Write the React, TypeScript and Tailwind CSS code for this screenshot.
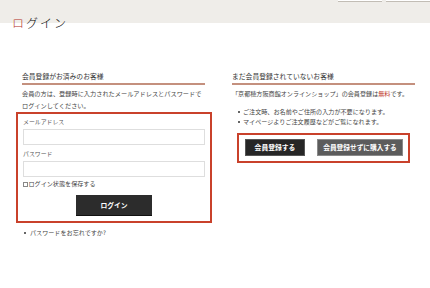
import React from 'react';

const FONT = { fontFamily: '"Noto Sans CJK JP", "Noto Sans", sans-serif' };

function SectionHeading({ children }: { children: React.ReactNode }) {
  return (
    <h2 className="text-[6.8px] leading-[10px] text-[#333] pb-[2px] border-b-2 border-[#c4907e]">
      {children}
    </h2>
  );
}

function Field({ label }: { label: string }) {
  return (
    <div>
      <div className="text-[5.9px] leading-[10px] text-[#555]">{label}</div>
      <input className="mt-[2px] block w-full h-[16px] border border-[#dedede] bg-white outline-none" />
    </div>
  );
}

export default function App() {
  return (
    <div className="w-[430px] h-[288px] bg-white overflow-hidden text-[#333]" style={FONT}>
      {/* top band */}
      <div className="h-[23px] bg-[#efede9] flex justify-end items-start gap-[4px]">
        <div className="w-[44px] h-[2px] bg-white border-b border-[#c2bdb5]" />
        <div className="w-[44px] h-[2px] bg-white border-b border-[#c2bdb5]" />
      </div>

      <h1 className="-mt-[8px] pl-[12px] text-[12px] leading-[16px] tracking-[2px] font-light text-black">
        <span className="text-[#b5322a]">ロ</span>グイン
      </h1>

      <div className="mt-[40px] pl-[22px] pr-[15px] flex gap-[27px]">
        {/* left column */}
        <div className="w-[183px]">
          <SectionHeading>会員登録がお済みのお客様</SectionHeading>
          <p className="mt-[3px] text-[6.2px] leading-[12px] text-[#444]">
            会員の方は、登録時に入力されたメールアドレスとパスワードで
            <br />
            ログインしてください。
          </p>
          <div className="-ml-[6px] -mr-[7px] border-2 border-[#c9412b] px-[5px] pt-[3px] pb-[5px]">
            <Field label="メールアドレス" />
            <div className="mt-[4px]">
              <Field label="パスワード" />
            </div>
            <label className="mt-[2px] flex items-center text-[6.1px] leading-[10px] text-[#444]">
              <span className="inline-block w-[5px] h-[5px] border border-[#888] mr-[0.5px]" />
              ログイン状態を保存する
            </label>
            <div className="mt-[6px] flex justify-center">
              <button className="w-[76px] h-[21px] bg-[#2c2c2c] border-b border-[#111] text-white text-[6.8px] font-bold">
                ログイン
              </button>
            </div>
          </div>
          <ul className="mt-[5px] text-[6.1px] leading-[10px] text-[#444]">
            <li className="flex items-center pl-[2px]">
              <span className="w-[2px] h-[2px] rounded-full bg-[#333] mr-[4px]" />
              パスワードをお忘れですか?
            </li>
          </ul>
        </div>

        {/* right column */}
        <div className="w-[183px]">
          <SectionHeading>まだ会員登録されていないお客様</SectionHeading>
          <p className="mt-[3px] text-[6.1px] leading-[12px] text-[#444]">
            「京都穂方阪商館オンラインショップ」の会員登録は<span className="text-[#c0392b]">無料</span>です。
          </p>
          <ul className="mt-[7px] text-[6.1px] leading-[10px] text-[#444]">
            <li className="flex items-center pl-[6px]">
              <span className="w-[2px] h-[2px] rounded-full bg-[#333] mr-[3px]" />
              ご注文時、お名前やご住所の入力が不要になります。
            </li>
            <li className="flex items-center pl-[6px]">
              <span className="w-[2px] h-[2px] rounded-full bg-[#333] mr-[3px]" />
              マイページよりご注文履歴などがご覧になれます。
            </li>
          </ul>
          <div className="mt-[6px] mx-[5px] border-2 border-[#c9412b] pl-[6px] pr-[5px] pt-[4px] pb-[5px] flex gap-[12px]">
            <button className="w-[60px] h-[17px] bg-[#262626] border border-[#555] text-white text-[6.8px] font-bold">
              会員登録する
            </button>
            <button className="w-[86px] h-[17px] bg-[#5c5c5c] border border-[#8a8a8a] text-white text-[6.7px] font-bold">
              会員登録せずに購入する
            </button>
          </div>
        </div>
      </div>
    </div>
  );
}
